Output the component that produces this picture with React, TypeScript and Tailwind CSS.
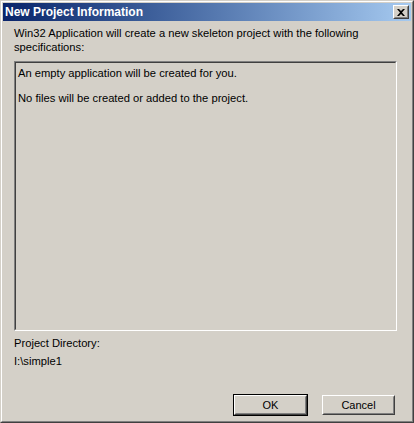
const font = { fontFamily: '"Liberation Sans", Arial, sans-serif' }

const Button = ({ label, isDefault }: { label: string; isDefault?: boolean }) => (
	<div className={isDefault ? 'border border-black' : 'border border-transparent'}>
		<div className="border border-t-white border-l-white border-r-[#404040] border-b-[#404040]">
			<div className="flex h-[18px] w-[71px] items-center justify-center border border-t-[#d4d0c8] border-l-[#d4d0c8] border-r-[#808080] border-b-[#808080] text-[11px] text-black">
				{label}
			</div>
		</div>
	</div>
)

const App = () => {
	return (
		<div className="h-[423px] w-[414px] bg-[#d4d0c8]" style={font}>
			<div className="h-full w-full border border-t-[#d4d0c8] border-l-[#d4d0c8] border-r-[#404040] border-b-[#404040]">
				<div className="flex h-full w-full flex-col border border-t-white border-l-white border-r-[#808080] border-b-[#808080] p-px">
					<div className="flex h-[18px] items-center justify-between bg-gradient-to-r from-[#0a246a] to-[#a6caf0] pl-[2px] pr-[2px]">
						<span className="text-[12px] font-bold text-white">New Project Information</span>
						<div className="border border-t-white border-l-white border-r-[#404040] border-b-[#404040]">
							<div className="flex h-[12px] w-[14px] items-center justify-center border border-t-[#d4d0c8] border-l-[#d4d0c8] border-r-[#808080] border-b-[#808080] bg-[#d4d0c8]">
								<svg width="8" height="7" viewBox="0 0 8 7">
									<path d="M0 0h2l2 2 2-2h2L5 3.5 8 7H6L4 5 2 7H0l3-3.5z" fill="#000" />
								</svg>
							</div>
						</div>
					</div>
					<div className="flex flex-1 flex-col pl-[11px] pr-[14px] pt-[5px] text-[11.2px] leading-[14px] text-black">
						<p>Win32 Application will create a new skeleton project with the following<br />specifications:</p>
						<div className="mt-[7px] border border-t-[#808080] border-l-[#808080] border-b-white border-r-white">
							<div className="h-[268px] border border-t-[#404040] border-l-[#404040] border-b-[#d4d0c8] border-r-[#d4d0c8] px-[2px] pt-[3px]">
								<p>An empty application will be created for you.</p>
								<p className="mt-[11px]">No files will be created or added to the project.</p>
							</div>
						</div>
						<p className="mt-[5px]">Project Directory:</p>
						<p className="mt-[4px]">I:\simple1</p>
						<div className="mt-auto mb-[4px] flex justify-end gap-[13px] pr-px">
							<Button label="OK" isDefault />
							<Button label="Cancel" />
						</div>
					</div>
				</div>
			</div>
		</div>
	)
}

export default App
